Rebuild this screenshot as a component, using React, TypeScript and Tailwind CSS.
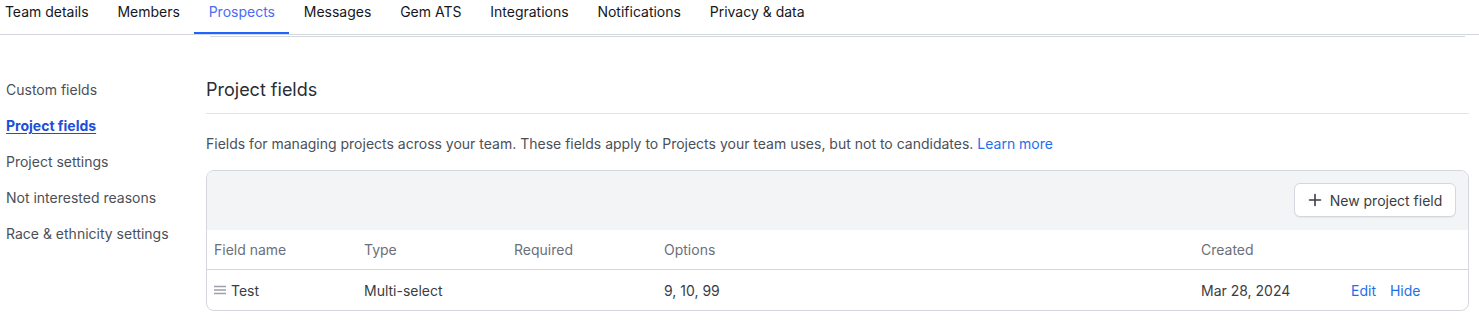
import React from "react";

const tabs = ["Team details", "Members", "Prospects", "Messages", "Gem ATS", "Integrations", "Notifications", "Privacy & data"];
const side = ["Custom fields", "Project fields", "Project settings", "Not interested reasons", "Race & ethnicity settings"];

export default function App() {
  return (
    <div className="w-[1479px] h-[323px] bg-white overflow-hidden text-[14px]" style={{ fontFamily: "Inter, 'Noto Sans', sans-serif" }}>
      <nav className="flex h-[35px] border-b border-[#d4d7de]">
        <div className="flex -ml-[9.5px]">
          {tabs.map((t) => (
            <div
              key={t}
              className={
                "h-[34px] px-[14.4px] pt-[2px] leading-[20px] " +
                (t === "Prospects" ? "text-[#4a6cf7] border-b-2 border-[#1a66ff]" : "text-[#15171c]")
              }
            >
              {t}
            </div>
          ))}
        </div>
      </nav>
      <div className="ml-[210px] mr-[14px] mt-[1px] border-t border-[#d4d7de]" />
      <div className="flex">
        <aside className="w-[206px] pl-[6px] pt-[35px]">
          {side.map((s) => (
            <div
              key={s}
              className={
                "h-9 flex items-center leading-[20px] " +
                (s === "Project fields" ? "text-[#1d4ed8] font-bold underline underline-offset-2" : "text-[#4b5058]")
              }
            >
              {s}
            </div>
          ))}
        </aside>
        <main className="w-[1263px] pt-[39px]">
          <div className="pb-[9px] border-b border-[#e2e4e8]">
            <h1 className="text-[18px] leading-[28px] text-[#2a2d33]">Project fields</h1>
          </div>
          <p className="mt-[20px] leading-[20px] text-[#4b5058]">
            Fields for managing projects across your team. These fields apply to Projects your team uses, but not to candidates.{" "}
            <span className="text-[#1f6feb]">Learn more</span>
          </p>
          <div className="mt-[16px] border border-[#d4d7de] rounded-lg overflow-hidden">
            <div className="bg-[#f3f4f6] h-[59px] flex items-start justify-end pt-[12px] pr-[12px]">
              <button className="h-[34px] w-[162px] bg-white border border-[#d4d7de] rounded-md flex items-center justify-center gap-[8px] text-[#3a3d44] shadow-[0_1px_1px_rgba(0,0,0,0.05)]">
                <svg width="14" height="14" viewBox="0 0 14 14" fill="none" stroke="#3a3d44" strokeWidth="1.6" strokeLinecap="round">
                  <path d="M7 1.5v11M1.5 7h11" />
                </svg>
                <span>New project field</span>
              </button>
            </div>
            <div className="flex h-[40px] items-center border-b border-[#d4d7de] pl-[7px] text-[#6b7079]">
              <div className="w-[150px]">Field name</div>
              <div className="w-[150px]">Type</div>
              <div className="w-[150px]">Required</div>
              <div className="w-[537px]">Options</div>
              <div className="w-[150px]">Created</div>
              <div className="flex-1" />
            </div>
            <div className="flex h-[40px] items-center pl-[7px] text-[#3a3d44]">
              <div className="w-[150px] flex items-center gap-[5px]">
                <svg width="12" height="10" viewBox="0 0 12 10" fill="none" stroke="#9ca0a8" strokeWidth="1.3">
                  <path d="M0 1.5h12M0 5h12M0 8.5h12" />
                </svg>
                <span>Test</span>
              </div>
              <div className="w-[150px]">Multi-select</div>
              <div className="w-[150px]" />
              <div className="w-[537px]">9, 10, 99</div>
              <div className="w-[150px]">Mar 28, 2024</div>
              <div className="flex-1 flex gap-[14px] text-[#1f6feb]">
                <span>Edit</span>
                <span>Hide</span>
              </div>
            </div>
          </div>
        </main>
      </div>
    </div>
  );
}
